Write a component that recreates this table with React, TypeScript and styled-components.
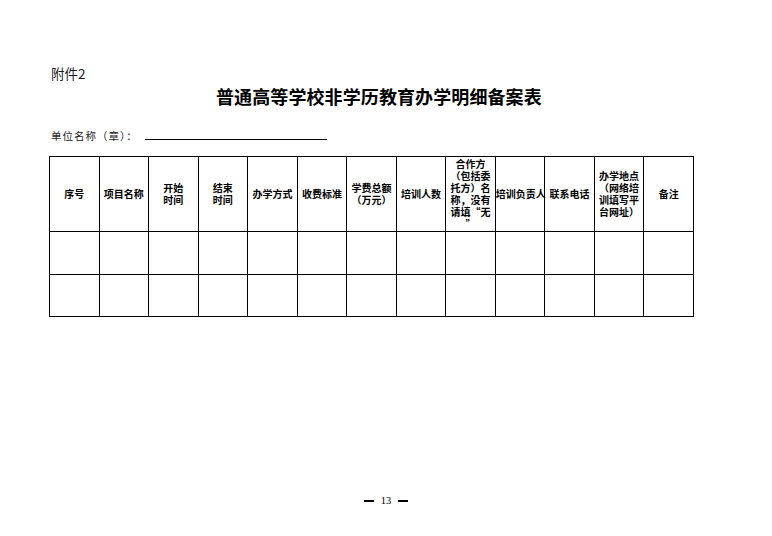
import React from "react";
import styled, { createGlobalStyle } from "styled-components";

const Global = createGlobalStyle`
  html, body {
    margin: 0;
    padding: 0;
    background: #ffffff;
  }
  body {
    font-family: "Noto Sans CJK SC", "Noto Sans", sans-serif;
    color: #000;
  }
`;

const Page = styled.div`
  width: 772px;
  height: 536px;
  box-sizing: border-box;
  padding: 65px 0 0 49px;
  display: flex;
  flex-direction: column;
  align-items: flex-start;
  overflow: hidden;
`;

const Attachment = styled.div`
  font-size: 13.5px;
  line-height: 16px;
  color: #1a1a1a;
  margin-left: 2px;
`;

const Title = styled.h1`
  margin: 4px 0 0 167px;
  font-size: 18px;
  line-height: 22px;
  font-weight: 700;
  letter-spacing: 0.1px;
  color: #000;
`;

const UnitRow = styled.div`
  margin-top: 22px;
  margin-left: 2px;
  display: flex;
  align-items: flex-end;
  gap: 7px;
`;

const UnitLabel = styled.span`
  font-size: 10.5px;
  line-height: 14px;
  letter-spacing: 1px;
  color: #222;
`;

const Blank = styled.span`
  display: block;
  width: 182px;
  height: 0;
  border-bottom: 1.5px solid #000;
  margin-bottom: 3px;
`;

const Table = styled.table`
  margin-top: 13px;
  width: 645px;
  table-layout: fixed;
  border-collapse: collapse;
`;

const HeadCell = styled.th<{ $tight?: boolean }>`
  height: 75px;
  box-sizing: border-box;
  border: 1.5px solid #000;
  padding: 0 ${(p) => (p.$tight ? 0 : 3)}px;
  font-size: 10px;
  line-height: 12px;
  font-weight: 700;
  text-align: ${(p) => (p.$tight ? "left" : "center")};
  vertical-align: middle;
  white-space: nowrap;
  overflow: visible;
`;

const BodyCell = styled.td<{ $h: number }>`
  height: ${(p) => p.$h}px;
  box-sizing: border-box;
  border: 1.5px solid #000;
  padding: 0;
`;

const Footer = styled.div`
  margin: 177px 0 0 -49px;
  width: 772px;
  display: flex;
  justify-content: center;
  align-items: center;
  gap: 7px;
  font-family: "Liberation Serif", serif;
  font-size: 10.5px;
  line-height: 14px;
`;

const Dash = styled.span`
  display: block;
  width: 10px;
  height: 2px;
  background: #000;
`;

type Head = { lines: string[]; tight?: boolean };

const headers: Head[] = [
  { lines: ["序号"] },
  { lines: ["项目名称"] },
  { lines: ["开始", "时间"] },
  { lines: ["结束", "时间"] },
  { lines: ["办学方式"] },
  { lines: ["收费标准"] },
  { lines: ["学费总额", "（万元）"] },
  { lines: ["培训人数"] },
  { lines: ["合作方", "（包括委", "托方）名", "称，没有", "请填“无", "”"] },
  { lines: ["培训负责人"], tight: true },
  { lines: ["联系电话"] },
  { lines: ["办学地点", "（网络培", "训填写平", "台网址）"] },
  { lines: ["备注"] },
];

const rowHeights = [43, 42];

export default function App() {
  return (
    <>
      <Global />
      <Page>
        <Attachment>附件2</Attachment>
        <Title>普通高等学校非学历教育办学明细备案表</Title>
        <UnitRow>
          <UnitLabel>单位名称（章）：</UnitLabel>
          <Blank />
        </UnitRow>
        <Table>
          <thead>
            <tr>
              {headers.map((h, i) => (
                <HeadCell key={i} $tight={h.tight}>
                  {h.lines.map((l, j) => (
                    <React.Fragment key={j}>
                      {j > 0 && <br />}
                      {l}
                    </React.Fragment>
                  ))}
                </HeadCell>
              ))}
            </tr>
          </thead>
          <tbody>
            {rowHeights.map((h, r) => (
              <tr key={r}>
                {headers.map((_, c) => (
                  <BodyCell key={c} $h={h} />
                ))}
              </tr>
            ))}
          </tbody>
        </Table>
        <Footer>
          <Dash />
          <span>13</span>
          <Dash />
        </Footer>
      </Page>
    </>
  );
}
